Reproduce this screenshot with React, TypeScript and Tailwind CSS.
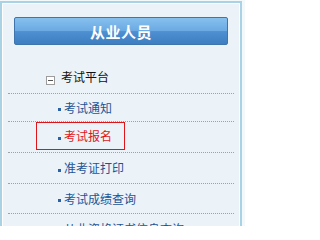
import React from "react";

const items = [
  { label: "考试通知", h: "h-[28px]", active: false },
  { label: "考试报名", h: "h-[31px]", active: true },
  { label: "准考证打印", h: "h-[31px]", active: false },
  { label: "考试成绩查询", h: "h-[30px]", active: false },
  { label: "从业资格证书信息查询", h: "h-[30px]", active: false },
];

export default function App() {
  return (
    <div
      className="w-[245px] h-[226px] overflow-hidden bg-[#f3f8fb]"
      style={{ fontFamily: '"Noto Sans CJK SC", "Noto Sans", sans-serif' }}
    >
      <div className="w-[242px] h-[240px] mt-[1px] border-2 border-b-0 border-[#a9d3e5] bg-[#ecf3f8]">
        <div className="h-full border border-b-0 border-white pt-[13px]">
          <div className="mx-[11px] h-[28px] rounded-[2px] border border-[#3f74ad] bg-[linear-gradient(to_bottom,#86c0ee_0%,#6aa9e2_50%,#4f90d2_52%,#3d7ec2_100%)] flex items-center justify-center">
            <span className="text-white font-bold text-[15px] leading-none tracking-[0.5px]">
              从业人员
            </span>
          </div>
          <div className="mx-[5px] mt-[26px]">
            <div className="h-[23px] border-b border-dotted border-[#9aa3ab] flex items-start pl-[38px]">
              <span className="w-[9px] h-[9px] mt-[5px] border border-[#9c9c9c] bg-white flex items-center justify-center">
                <span className="block w-[5px] h-[1px] bg-[#555]" />
              </span>
              <span className="ml-[6px] text-[12px] leading-[12px] text-[#111]">考试平台</span>
            </div>
            {items.map((it) => (
              <div
                key={it.label}
                className={`${it.h} border-b border-dotted border-[#9aa3ab] pl-[28px] flex items-center`}
              >
                <div
                  className={`h-[28px] flex items-center pl-[21px] pr-[6px] border ${
                    it.active ? "border-[#e0151a] w-[89px] mt-[-2px]" : "border-transparent"
                  }`}
                >
                  <span className="w-[3px] h-[3px] mt-[4px] bg-[#2a62a8]" />
                  <span
                    className={`ml-[3px] text-[12px] leading-[12px] whitespace-nowrap ${
                      it.active ? "text-[#e0151a]" : "text-[#1e5395]"
                    }`}
                  >
                    {it.label}
                  </span>
                </div>
              </div>
            ))}
          </div>
        </div>
      </div>
    </div>
  );
}
